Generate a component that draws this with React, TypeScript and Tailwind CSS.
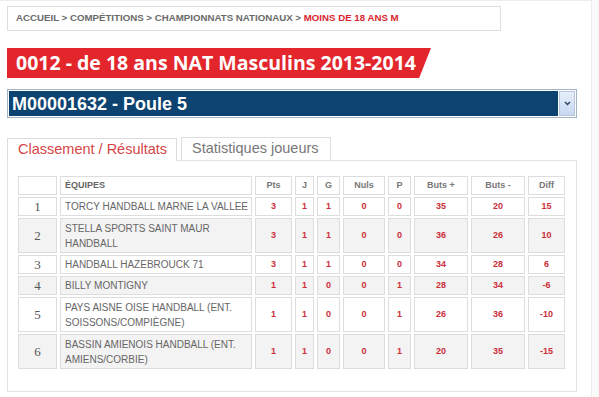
const rows = [
  { rank: 1, team: ["TORCY HANDBALL MARNE LA VALLEE"], pts: 3, j: 1, g: 1, n: 0, p: 0, bp: 35, bm: 20, diff: 15 },
  { rank: 2, team: ["STELLA SPORTS SAINT MAUR", "HANDBALL"], pts: 3, j: 1, g: 1, n: 0, p: 0, bp: 36, bm: 26, diff: 10 },
  { rank: 3, team: ["HANDBALL HAZEBROUCK 71"], pts: 3, j: 1, g: 1, n: 0, p: 0, bp: 34, bm: 28, diff: 6 },
  { rank: 4, team: ["BILLY MONTIGNY"], pts: 1, j: 1, g: 0, n: 0, p: 1, bp: 28, bm: 34, diff: -6 },
  { rank: 5, team: ["PAYS AISNE OISE HANDBALL (ENT.", "SOISSONS/COMPIÈGNE)"], pts: 1, j: 1, g: 0, n: 0, p: 1, bp: 26, bm: 36, diff: -10 },
  { rank: 6, team: ["BASSIN AMIENOIS HANDBALL (ENT.", "AMIENS/CORBIE)"], pts: 1, j: 1, g: 0, n: 0, p: 1, bp: 20, bm: 35, diff: -15 },
];

const headers = ["Pts", "J", "G", "Nuls", "P", "Buts +", "Buts -", "Diff"];

export default function App() {
  return (
    <div className="min-h-[397px] bg-[#fafafa] font-['Liberation_Sans',Arial,sans-serif]">
      <div className="w-[592px] min-h-[397px] bg-white border-r border-t border-[#ececec] px-[7px] pt-[5px]">
        {/* Breadcrumb */}
        <div className="w-[494px] h-[25px] border border-[#dedede] flex items-center pl-[8px] text-[9.7px] font-bold uppercase text-[#6a6a6a] whitespace-nowrap">
          <span>Accueil &gt; Compétitions &gt; Championnats nationaux &gt;&nbsp;</span>
          <span className="text-[#d8262e]">Moins de 18 ans M</span>
        </div>

        {/* Title banner */}
        <div className="mt-[17px] w-[424px] h-[30px] bg-[#e2262c] [clip-path:polygon(0_0,100%_0,97.2%_100%,0_100%)] flex items-center pl-[9px]">
          <h1 className="text-white font-['Open_Sans',sans-serif] font-bold text-[19.5px] leading-none whitespace-nowrap">
            0012 - de 18 ans NAT Masculins 2013-2014
          </h1>
        </div>

        {/* Select */}
        <div className="mt-[11px] w-[570px] h-[29px] border border-[#a3b4c6] bg-white p-px flex">
          <div className="flex-1 bg-[#0c4370] flex items-center pl-[3px] text-white font-bold text-[18px] leading-none">
            M00001632 - Poule 5
          </div>
          <div className="w-[16px] ml-px border border-[#b5c6de] bg-gradient-to-b from-[#e6eefb] to-[#c9d8f0] flex items-center justify-center">
            <svg width="7" height="5" viewBox="0 0 7 5">
              <path d="M1 1 L3.5 3.5 L6 1" fill="none" stroke="#2b3f63" strokeWidth="1.4" />
            </svg>
          </div>
        </div>

        {/* Tabs */}
        <div className="mt-[19px] flex items-end">
          <div className="h-[23px] w-[170px] border border-b-0 border-[#dddddd] bg-white flex items-center pl-[10px] text-[14.5px] text-[#d64545] relative top-px">
            Classement / Résultats
          </div>
          <div className="ml-[4px] h-[23px] w-[150px] border border-b-0 border-[#dddddd] bg-white flex items-center pl-[10px] text-[14.5px] text-[#777777]">
            Statistiques joueurs
          </div>
        </div>

        {/* Panel */}
        <div className="w-[570px] h-[232px] border border-[#e3e3e3] bg-white pl-[7px] pt-[13px]">
          <table className="table-fixed border-separate border-spacing-x-[3px] border-spacing-y-[2px] w-[553px] leading-[15px]">
            <colgroup>
              <col className="w-[39px]" />
              <col className="w-[192px]" />
              <col className="w-[37px]" />
              <col className="w-[19px]" />
              <col className="w-[23px]" />
              <col className="w-[42px]" />
              <col className="w-[23px]" />
              <col className="w-[54px]" />
              <col className="w-[54px]" />
              <col className="w-[37px]" />
            </colgroup>
            <thead>
              <tr className="h-[19px]">
                <th className="border border-[#dddddd] bg-white" />
                <th className="border border-[#dddddd] bg-white text-left pl-[4px] text-[9px] font-bold text-[#666] uppercase">Équipes</th>
                {headers.map((h) => (
                  <th key={h} className="border border-[#dddddd] bg-white text-center text-[9px] font-bold text-[#777]">
                    {h}
                  </th>
                ))}
              </tr>
            </thead>
            <tbody>
              {rows.map((r, i) => {
                const bg = i % 2 === 1 ? "bg-[#f3f3f3]" : "bg-white";
                const tall = r.team.length > 1;
                const nums = [r.pts, r.j, r.g, r.n, r.p, r.bp, r.bm, r.diff];
                return (
                  <tr key={r.rank} className={tall ? "h-[35px]" : "h-[19px]"}>
                    <td className={`border border-[#dddddd] ${bg} text-center font-['Liberation_Serif',serif] text-[13px] text-[#555]`}>
                      {r.rank}
                    </td>
                    <td className={`border border-[#dddddd] ${bg} pl-[4px] text-[10px] text-[#666] whitespace-nowrap overflow-hidden`}>
                      {r.team.map((t) => (
                        <div key={t}>{t}</div>
                      ))}
                    </td>
                    {nums.map((v, k) => (
                      <td key={k} className={`border border-[#dddddd] ${bg} text-center text-[9px] font-bold text-[#cc2f3a]`}>
                        {v}
                      </td>
                    ))}
                  </tr>
                );
              })}
            </tbody>
          </table>
        </div>
      </div>
    </div>
  );
}
